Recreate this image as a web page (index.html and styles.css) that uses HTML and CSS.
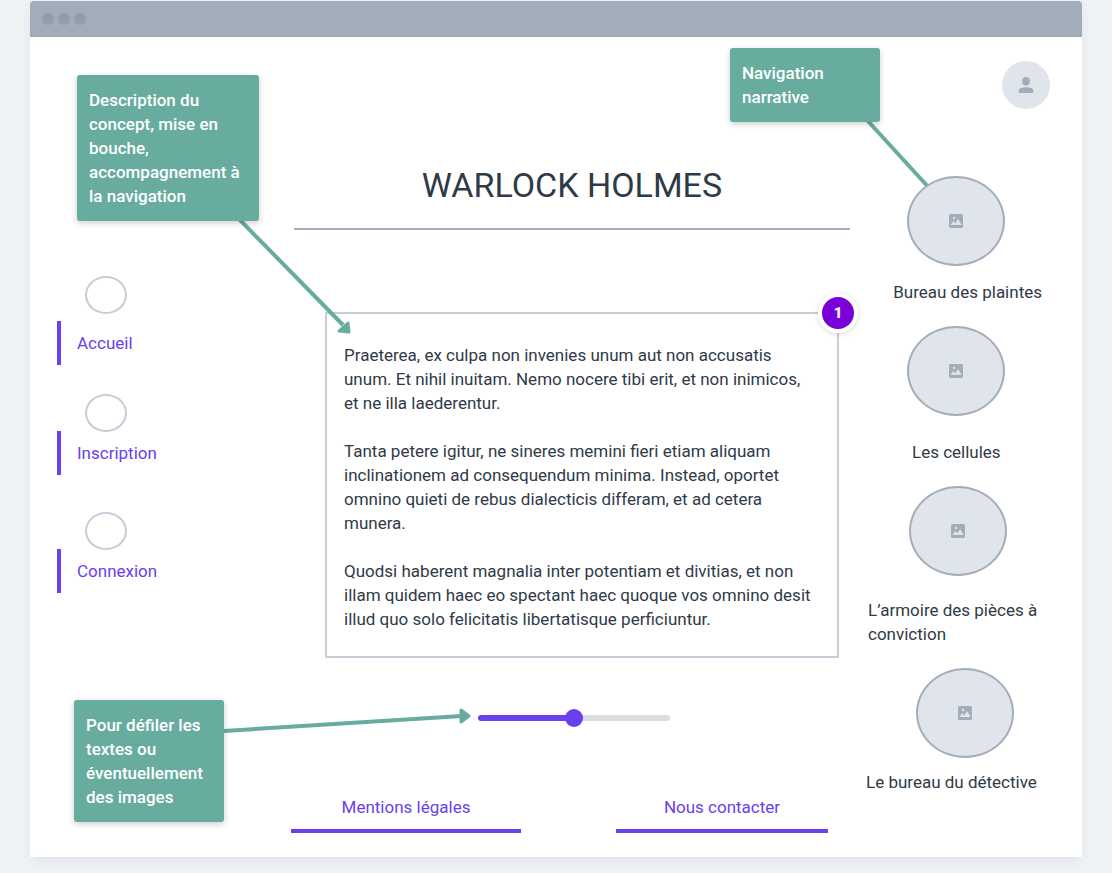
FILE: index.html
```html
<!DOCTYPE html>
<html lang="fr">
<head>
<meta charset="utf-8">
<meta name="viewport" content="width=device-width, initial-scale=1">
<title>Warlock Holmes</title>
<link rel="stylesheet" href="styles.css">
</head>
<body>
<svg class="sprite" aria-hidden="true">
  <symbol id="picture" viewBox="0 0 14 14">
    <rect width="14" height="14" rx="1.500" fill="#a3adb9"/>
    <circle cx="5" cy="4" r="1.200" fill="#e0e4eb"/>
    <path fill="#e0e4eb" d="M1.500 11L4.300 7l1.900 2.400L9.100 5l3.500 6z"/>
  </symbol>
</svg>
<div class="window">
  <div class="titlebar"><span class="dot"></span><span class="dot"></span><span class="dot"></span></div>
  <div class="page">
    <nav class="menu" aria-label="Menu principal">
      <div class="menu-item menu-item-first"><span class="oval"></span><a class="menu-link" href="#">Accueil</a></div>
      <div class="menu-item"><span class="oval"></span><a class="menu-link" href="#">Inscription</a></div>
      <div class="menu-item"><span class="oval"></span><a class="menu-link" href="#">Connexion</a></div>
    </nav>

    <main class="content">
      <h1 class="title">WARLOCK HOLMES</h1>
      <section class="story">
        <p>Praeterea, ex culpa non invenies unum aut non accusatis unum. Et nihil inuitam. Nemo nocere tibi erit, et non inimicos,<br>et ne illa laederentur.</p>
        <p>Tanta petere igitur, ne sineres memini fieri etiam aliquam inclinationem ad consequendum minima. Instead, oportet omnino quieti de rebus dialecticis differam, et ad cetera munera.</p>
        <p>Quodsi haberent magnalia inter potentiam et divitias, et non illam quidem haec eo spectant haec quoque vos omnino desit illud quo solo felicitatis libertatisque perficiuntur.</p>
        <span class="badge">1</span>
      </section>
      <input class="slider" type="range" min="0" max="100" value="50" aria-label="Défilement des textes">
      <footer class="footer">
        <a class="footer-link" href="#">Mentions légales</a>
        <a class="footer-link footer-link-contact" href="#">Nous contacter</a>
      </footer>
    </main>

    <aside class="side">
      <button class="avatar" type="button" aria-label="Profil">
        <svg class="avatar-icon" viewBox="0 0 16 16" aria-hidden="true"><ellipse cx="8" cy="4.300" rx="3.900" ry="4.300"/><path d="M.7 16v-2.300C.7 11 4 10.200 8 10.200s7.300.8 7.300 3.500V16z"/></svg>
      </button>
      <div class="places">
        <a class="place place-right" href="#"><span class="disc"><svg class="picture"><use href="#picture"/></svg></span><span class="caption">Bureau des plaintes</span></a>
        <a class="place place-center" href="#"><span class="disc"><svg class="picture"><use href="#picture"/></svg></span><span class="caption">Les cellules</span></a>
        <a class="place place-left" href="#"><span class="disc"><svg class="picture"><use href="#picture"/></svg></span><span class="caption">L’armoire des pièces à conviction</span></a>
        <a class="place place-last" href="#"><span class="disc"><svg class="picture"><use href="#picture"/></svg></span><span class="caption">Le bureau du détective</span></a>
      </div>
    </aside>

    <svg class="arrow arrow-intro" viewBox="0 0 114 114" aria-hidden="true"><path class="line" d="M0 0L104 106"/><path class="head" d="M109 104l1 9-10-1z"/></svg>
    <svg class="arrow arrow-nav" viewBox="0 0 66 72" aria-hidden="true"><path class="line" d="M2 0L66 70"/></svg>
    <svg class="arrow arrow-scroll" viewBox="0 0 248 24" aria-hidden="true"><path class="line" d="M0 19L238 4"/><path class="head" d="M237-2v12l8-6z"/></svg>
    <div class="note note-intro">Description du concept, mise en bouche, accompagnement à la navigation</div>
    <div class="note note-nav">Navigation narrative</div>
    <div class="note note-scroll">Pour défiler les textes ou éventuellement des images</div>
  </div>
</div>
</body>
</html>
```
FILE: styles.css
```css
* { box-sizing: border-box; }

body {
  margin: 0;
  padding: 1px 30px 16px;
  background: #eff3f6;
  color: #2f3a48;
  font: 17px/24px Roboto, "Liberation Sans", sans-serif;
}

a { color: inherit; text-decoration: none; }

.sprite { position: absolute; width: 0; height: 0; }

.window {
  background: #fff;
  border-radius: 4px 4px 0 0;
  box-shadow: 0 4px 12px rgba(40, 50, 70, 0.08);
}

.titlebar {
  display: flex;
  align-items: center;
  gap: 4px;
  height: 36px;
  padding: 0 12px;
  background: #a3adb9;
  border-radius: 4px 4px 0 0;
}

.dot { width: 12px; height: 12px; border-radius: 50%; background: #939dac; }

.page {
  position: relative;
  display: grid;
  grid-template-columns: 261px minmax(0, 1fr) 232px;
  padding-bottom: 24px;
}

/* Left menu */
.menu {
  display: grid;
  grid-auto-rows: 118px;
  align-content: start;
  padding: 239px 0 0 27px;
  color: #6a40ee;
}

.oval {
  display: block;
  width: 42px;
  height: 38px;
  margin-left: 28px;
  border: 2px solid #c7cdd8;
  border-radius: 50%;
}

.menu-link {
  display: block;
  margin-top: -1px;
  padding: 10px 16px;
  border-left: 4px solid #6a40ee;
}

.menu-item-first .menu-link { margin-top: 7px; }

/* Centre column */
.content { display: flex; flex-direction: column; }

.title {
  margin: 0 0 82px 3px;
  padding: 128px 0 22px;
  border-bottom: 2px solid #a3adbb;
  font-size: 34px;
  font-weight: 400;
  line-height: 41px;
  text-align: center;
}

.story {
  position: relative;
  margin: 0 11px 0 34px;
  padding: 29px 15px 25px 17px;
  border: 2px solid #c8cdda;
}

.story p { margin: 0 0 24px; }
.story p:last-of-type { margin-bottom: 0; }

.badge {
  position: absolute;
  top: -21px;
  right: -21px;
  width: 40px;
  height: 40px;
  border: 4px solid #fff;
  border-radius: 50%;
  background: #7a00d8;
  box-shadow: 0 1px 5px rgba(0, 0, 0, 0.16);
  color: #fff;
  font-size: 15px;
  font-weight: 900;
  line-height: 32px;
  text-align: center;
}

.slider {
  appearance: none;
  width: 192px;
  height: 18px;
  margin: 51px 0 0 187px;
  background: transparent;
}

.slider::-webkit-slider-runnable-track {
  height: 6px;
  border-radius: 3px;
  background: linear-gradient(to right, #6a40ee 50%, #d9dde1 50%);
}

.slider::-webkit-slider-thumb {
  appearance: none;
  width: 18px;
  height: 18px;
  margin-top: -6px;
  border-radius: 50%;
  background: #6a40ee;
}

.footer {
  display: flex;
  justify-content: space-between;
  margin: 68px 22px 0 0;
  color: #6a40ee;
  text-align: center;
}

.footer-link { width: 230px; padding-bottom: 10px; border-bottom: 4px solid #6a40ee; }
.footer-link-contact { width: 212px; }

/* Right column */
.side { display: flex; flex-direction: column; padding: 24px 32px 0 16px; }

.avatar {
  display: grid;
  place-items: center;
  align-self: flex-end;
  width: 48px;
  height: 48px;
  padding: 0;
  border: 0;
  border-radius: 50%;
  background: #e0e4eb;
}

.avatar-icon { width: 16px; height: 16px; fill: #a3adb9; }

.places {
  display: grid;
  gap: 22px;
  width: 176px;
  margin-top: 67px;
}

.place { position: relative; z-index: 1; display: grid; gap: 14px; }

.disc {
  display: grid;
  place-items: center;
  width: 98px;
  height: 90px;
  margin-left: 41px;
  border: 2px solid #a3adbb;
  border-radius: 50%;
  background: #e0e4eb;
}

.picture { width: 14px; height: 14px; }

.place-right .caption { text-align: right; }
.place-center { gap: 24px; }
.place-center .caption { padding-left: 46px; }
.place-left { gap: 22px; padding-left: 2px; }
.place-last { gap: 12px; }
.place-last .disc { margin-left: 50px; }

/* Annotations laid over the wireframe */
.note {
  position: absolute;
  width: 150px;
  padding: 13px 12px;
  border-radius: 3px;
  background: #67ac9e;
  box-shadow: 0 2px 6px rgba(0, 0, 0, 0.2);
  color: #fff;
  font-weight: 500;
}

.note-intro { top: 38px; left: 47px; width: 182px; }
.note-nav { top: 11px; right: 202px; }
.note-scroll { top: 663px; left: 44px; }

.arrow { position: absolute; overflow: visible; }
.arrow .line { fill: none; stroke: #67ac9e; stroke-width: 4; }
.arrow .head { fill: #67ac9e; stroke: #67ac9e; stroke-width: 3; stroke-linejoin: round; }
.arrow-intro { top: 182px; left: 209px; width: 114px; height: 114px; }
.arrow-nav { top: 83px; right: 151px; width: 66px; height: 72px; }
.arrow-scroll { top: 675px; left: 194px; width: 248px; height: 24px; }
```
